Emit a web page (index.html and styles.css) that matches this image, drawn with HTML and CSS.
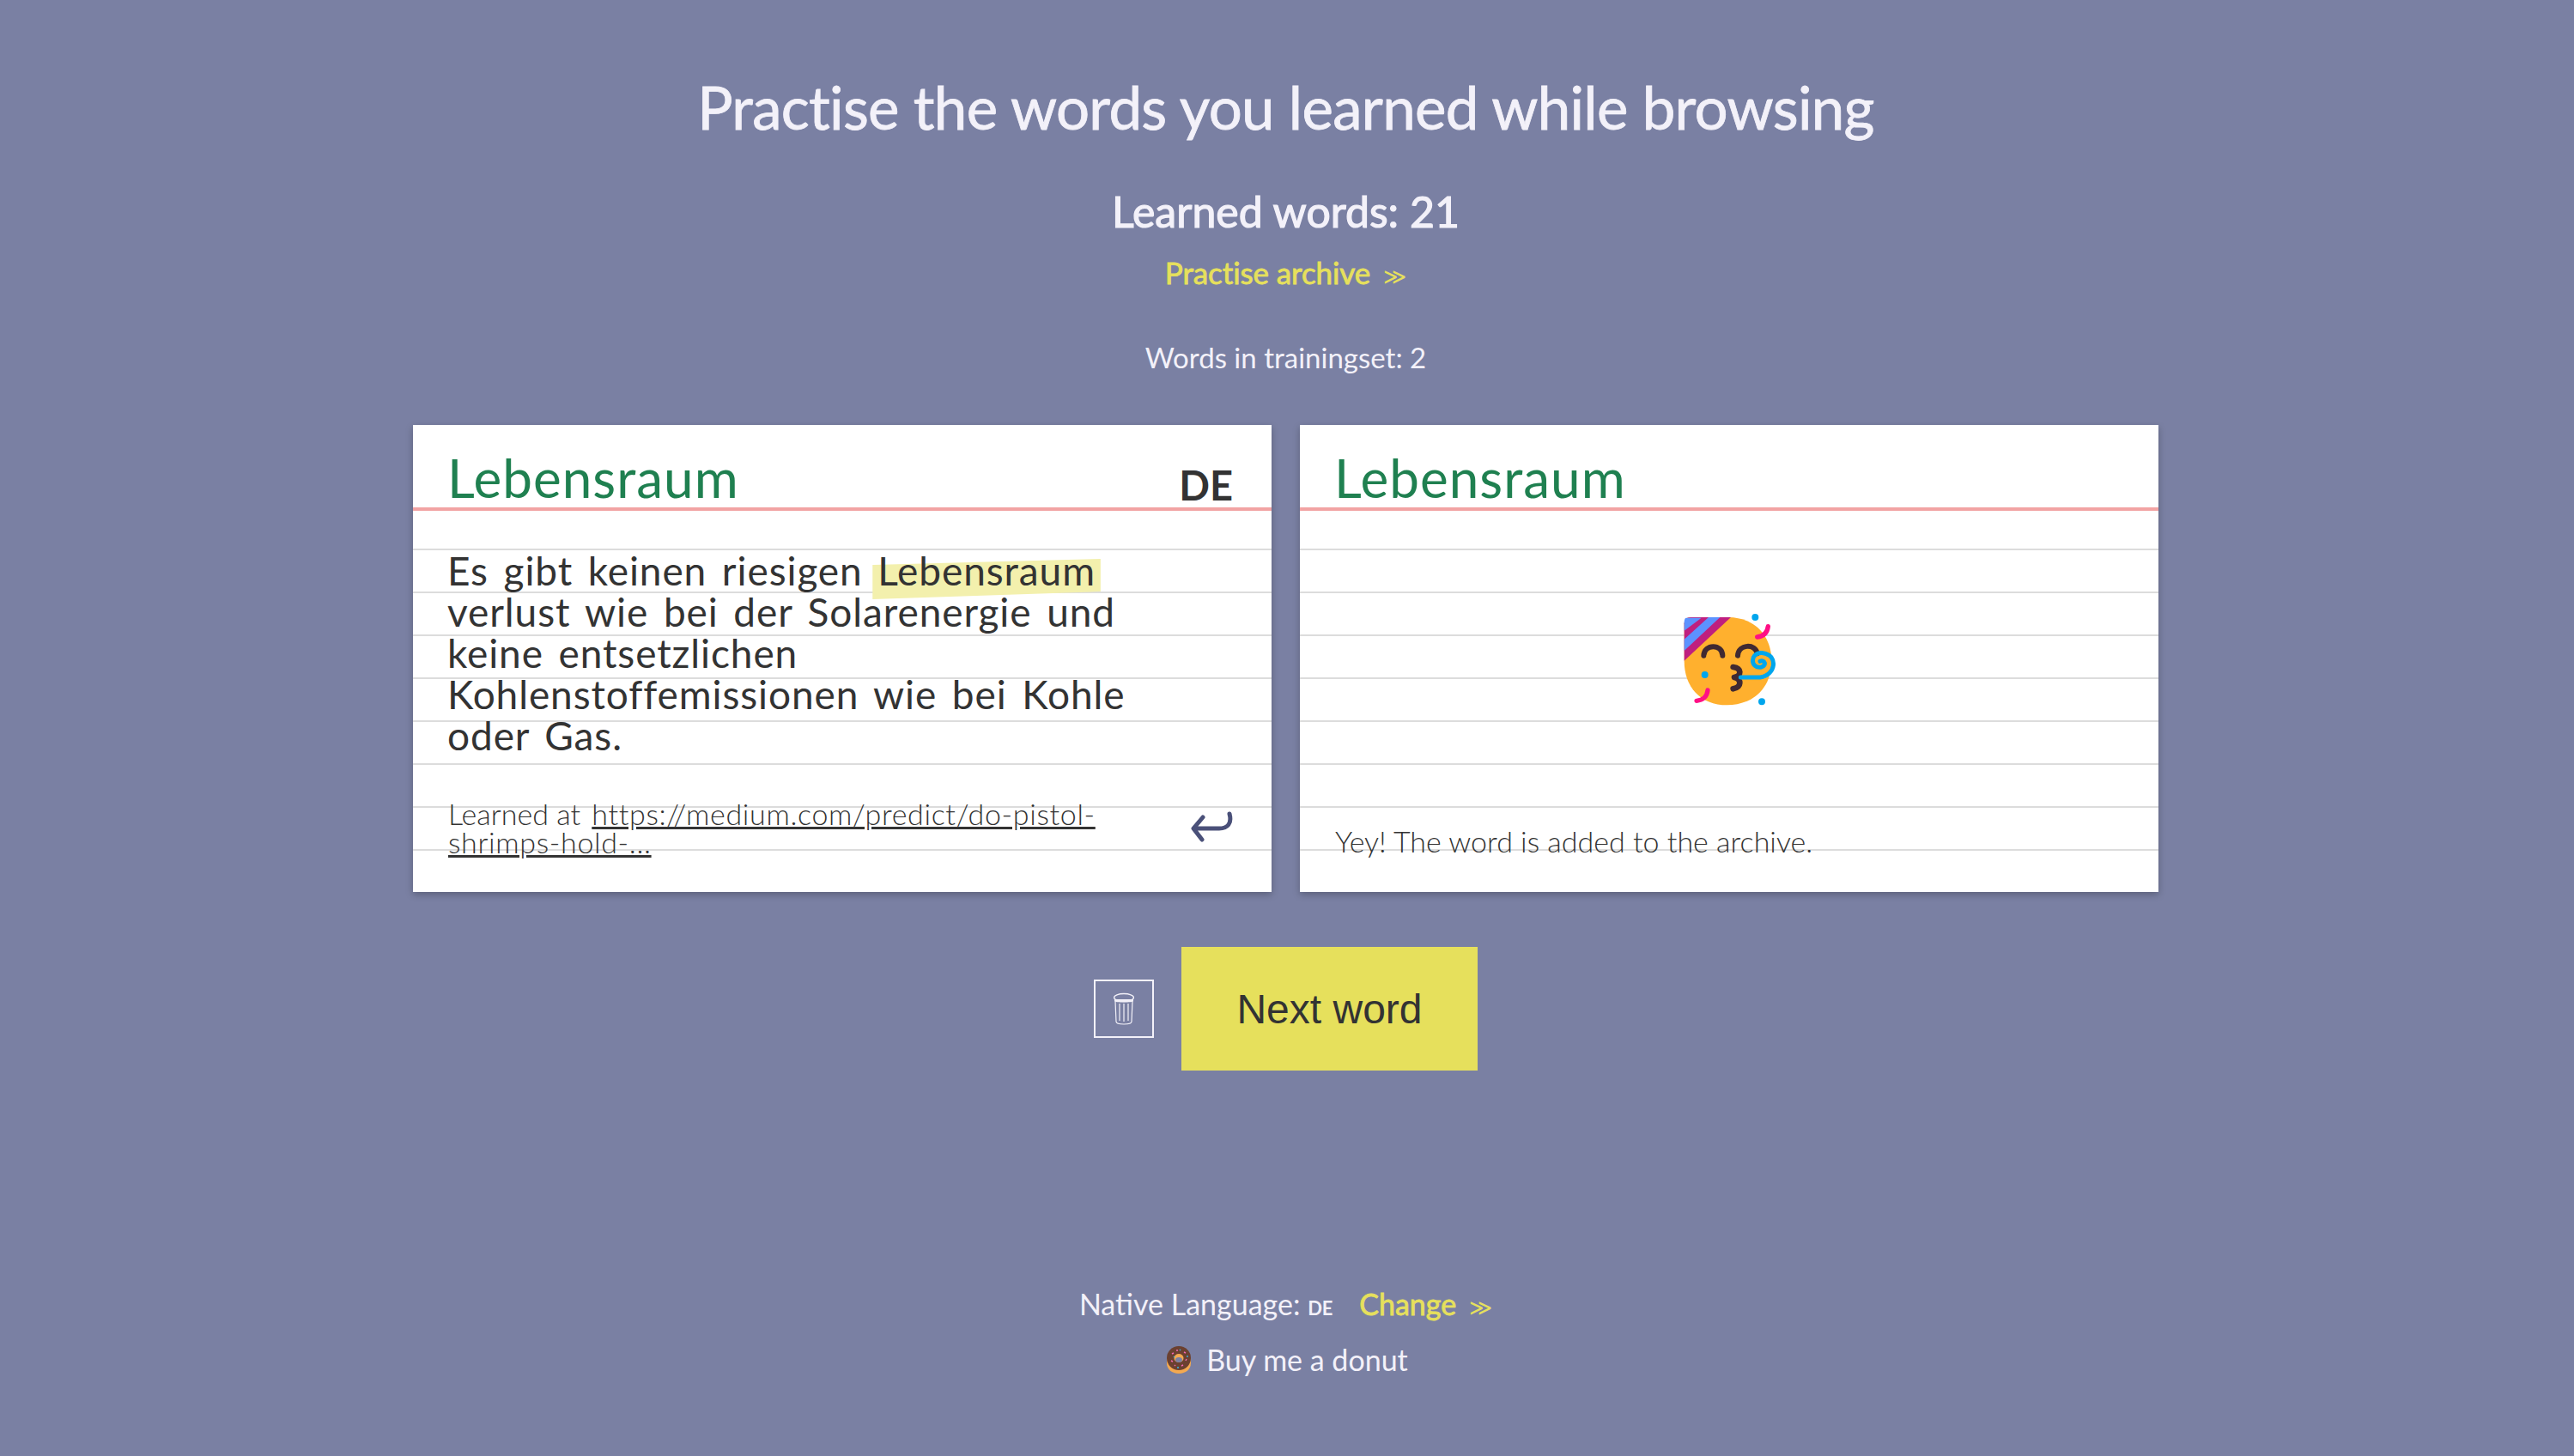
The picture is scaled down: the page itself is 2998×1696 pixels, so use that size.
FILE: index.html
```html
<!DOCTYPE html>
<html lang="en">
<head>
  <meta charset="UTF-8" />
  <title>Practise words</title>
  <link rel="stylesheet" href="styles.css">
</head>
<body>
  <div class="page">
    <h1 class="title">Practise the words you learned while browsing</h1>
    <h2 class="learned">Learned words: 21</h2>
    <a class="link archive-link">Practise archive <span class="arrows">≫</span></a>
    <p class="trainingset">Words in trainingset: 2</p>

    <!-- The two cards -->
    <div class="cards">
      <div class="card">
        <div class="card-head">
          <span class="word">Lebensraum</span>
          <span class="lang">DE</span>
        </div>
        <div class="card-body">
          <p class="sentence">Es gibt keinen riesigen <span class="mark">Lebensraum</span><br>verlust wie bei der Solarenergie und<br>keine entsetzlichen<br>Kohlenstoffemissionen wie bei Kohle<br>oder Gas.</p>
        </div>
        <div class="card-foot">
          <p class="source">Learned at <a class="source-link">https://medium.com/predict/do-pistol-<br>shrimps-hold-...</a></p>
          <svg class="turn" viewBox="0 0 50 36" width="50" height="36">
            <path d="M46 3C49 14 44 20 34 20H5M15 7L4 20L14 33" fill="none" stroke="#4a5079" stroke-width="5" stroke-linecap="round" stroke-linejoin="round"/>
          </svg>
        </div>
      </div>

      <div class="card">
        <div class="card-head">
          <span class="word">Lebensraum</span>
        </div>
        <div class="card-body card-body-center">
          <svg class="party" viewBox="60 40 330 330" width="110" height="110">
            <path d="M65 80Q65 58 88 58H220C320 60 370 130 370 210C370 310 300 365 215 365C120 365 65 300 65 210Z" fill="#ffb02e"/>
            <path d="M65 210V80Q65 58 88 58H228Z" fill="#bf1f7f"/>
            <path d="M65 74Q66 60 72 60H125L65 105ZM150 58H190L65 175V135Z" fill="#5c92ff"/>
            <path d="M133 192C135 150 198 150 199 192M252 192C255 150 315 150 320 185" fill="none" stroke="#402a32" stroke-width="18" stroke-linecap="round"/>
            <path d="M236 232C266 236 266 262 240 268C266 274 266 302 236 308" fill="none" stroke="#402a32" stroke-width="20" stroke-linecap="round" stroke-linejoin="round"/>
            <path d="M262 268H330C385 262 395 190 340 183C292 178 295 240 335 232C355 225 345 205 330 212" fill="none" stroke="#00a6ed" stroke-width="15" stroke-linecap="round"/>
            <circle cx="313" cy="58" r="12" fill="#00a6ed"/>
            <circle cx="137" cy="259" r="12" fill="#00a6ed"/>
            <circle cx="336" cy="353" r="12" fill="#00a6ed"/>
            <path d="M358 90C355 115 340 125 320 127M147 313C145 335 130 348 108 350" fill="none" stroke="#ff0f85" stroke-width="16" stroke-linecap="round"/>
          </svg>
        </div>
        <div class="card-foot card-foot-low">
          <p class="source">Yey! The word is added to the archive.</p>
        </div>
      </div>
    </div>

    <div class="actions">
      <button class="trash" type="button">
        <svg viewBox="0 0 24 38" width="24" height="38">
          <ellipse cx="12" cy="6" rx="11.5" ry="4.5" fill="none" stroke="#f2f0f8" stroke-width="1.4"/>
          <path d="M1 8V10C1 12 23 12 23 10V8" fill="#f2f0f8"/>
          <path d="M2 10L3 34C3 38 21 38 21 34L22 10M7 13V33M12 13V34M17 13V33" fill="none" stroke="#f2f0f8" stroke-width="1.2"/>
        </svg>
      </button>
      <button class="next" type="button">Next word</button>
    </div>

    <div class="footer">
      <p class="native">Native Language: <span class="native-code">DE</span> <a class="link change-link">Change <span class="arrows">≫</span></a></p>
      <p class="donut">
        <svg viewBox="0 0 28 32" width="28" height="32">
          <path d="M0 14V20C0 27 6 32 14 32S28 27 28 20V14Z" fill="#f4a950"/>
          <circle cx="14" cy="14" r="14" fill="#6b4030"/>
          <ellipse cx="14" cy="14" rx="5.5" ry="5" fill="#f4a950"/>
          <ellipse cx="14" cy="16" rx="4" ry="3" fill="#7a80a3"/>
          <path d="M6 9l2-1M20 7l2 1M5 17l2 1M22 17l1-2M11 5l2 0M17 23l2-1M9 22l1 1" stroke="#f06ab0" stroke-width="1.4"/>
          <path d="M15 4l1 1M24 11l0 2M8 13l1-1M12 25l2 0" stroke="#35b5e8" stroke-width="1.4"/>
        </svg>
        <span>Buy me a donut</span>
      </p>
    </div>
  </div>
</body>
</html>
```

FILE: styles.css
```css
:root {
  --page-bg: #7a80a3;
  --yellow: #e6e05c;
  --light: #f3f1f9;
  --dark: #333333;
}

html, body {
  margin: 0;
  padding: 0;
}

body {
  background-color: var(--page-bg);
  color: var(--light);
  font-family: Lato, "Open Sans", sans-serif;
  height: 1696px;
  overflow: hidden;
}

.page {
  width: 2995px;
  display: flex;
  flex-direction: column;
  align-items: center;
}

.title {
  margin: 83px 0 0;
  font-size: 69px;
  line-height: 84px;
  font-weight: 400;
  letter-spacing: -0.7px;
  -webkit-text-stroke: 0.8px var(--light);
}

.learned {
  margin: 49px 0 0;
  font-size: 50px;
  line-height: 60px;
  font-weight: 400;
  -webkit-text-stroke: 1.2px var(--light);
}

.link {
  color: var(--yellow);
  font-weight: 400;
  -webkit-text-stroke: 0.8px var(--yellow);
}

.arrows {
  font-family: "DejaVu Sans", sans-serif;
  font-weight: 400;
  font-size: 26px;
  margin-left: 6px;
  -webkit-text-stroke: 0;
}

.archive-link {
  margin-top: 19px;
  font-size: 35px;
  line-height: 44px;
  letter-spacing: -0.1px;
}

.trainingset {
  margin: 50px 0 0;
  font-size: 33px;
  line-height: 44px;
}

.cards {
  display: flex;
  gap: 33px;
  margin-top: 57px;
}

.card {
  width: 1000px;
  height: 544px;
  display: flex;
  flex-direction: column;
  color: var(--dark);
  background-color: #fff;
  background-image: linear-gradient(to bottom, transparent 48px, #dcdcdc 48px);
  background-size: 100% 50px;
  background-position: 0 46px;
  box-shadow: 0 3px 8px rgba(0, 0, 0, 0.25);
}

.card-head {
  height: 96px;
  background: #fff;
  border-bottom: 4px solid #f2a3a3;
  padding: 0 45px 0 40px;
  display: flex;
  justify-content: space-between;
  align-items: flex-end;
}

.word {
  color: #1f8050;
  font-size: 62px;
  line-height: 70px;
  letter-spacing: 1px;
}

.lang {
  font-size: 47px;
  font-weight: 700;
  line-height: 52px;
}

.card-body {
  height: 300px;
  padding: 46px 40px 0;
  box-sizing: border-box;
}

.card-body-center {
  padding: 118px 0 0 2px;
  display: flex;
  justify-content: center;
}

.sentence {
  margin: 0;
  font-size: 46px;
  line-height: 48px;
  letter-spacing: 0.9px;
  word-spacing: 5px;
}

.mark {
  position: relative;
  z-index: 0;
}

/* the marker stroke runs a little uphill */
.mark::before {
  content: "";
  position: absolute;
  z-index: -1;
  left: -6px;
  right: -6px;
  top: 14px;
  bottom: -6px;
  background: #f3f0ad;
  clip-path: polygon(0 15%, 100% 0, 100% 81%, 0 100%);
}

.card-foot {
  flex: 1;
  display: flex;
  justify-content: space-between;
  padding: 36px 45px 0 41px;
}

.card-foot-low {
  padding-top: 68px;
}

.source {
  margin: 0;
  font-size: 34px;
  line-height: 33px;
  font-weight: 300;
}

.source-link {
  text-decoration: underline;
  letter-spacing: 0.65px;
  margin-left: 4px;
}

.turn {
  margin-top: 14px;
}

.actions {
  display: flex;
  align-items: center;
  gap: 32px;
  margin-top: 64px;
}

.trash {
  width: 70px;
  height: 68px;
  padding: 0;
  background: none;
  border: 2px solid var(--light);
  display: flex;
  align-items: center;
  justify-content: center;
}

.next {
  width: 345px;
  height: 144px;
  border: none;
  background: var(--yellow);
  color: var(--dark);
  font-family: "Liberation Sans", Arial, sans-serif;
  font-size: 48px;
}

.footer {
  margin-top: 250px;
  text-align: center;
  font-size: 34px;
}

.native, .donut {
  margin: 0;
  line-height: 44px;
}

.native-code {
  font-size: 22px;
  font-weight: 700;
  margin-right: 22px;
}

.donut {
  margin-top: 16px;
  display: flex;
  align-items: center;
  justify-content: center;
  gap: 18px;
  padding-left: 4px;
}
```
